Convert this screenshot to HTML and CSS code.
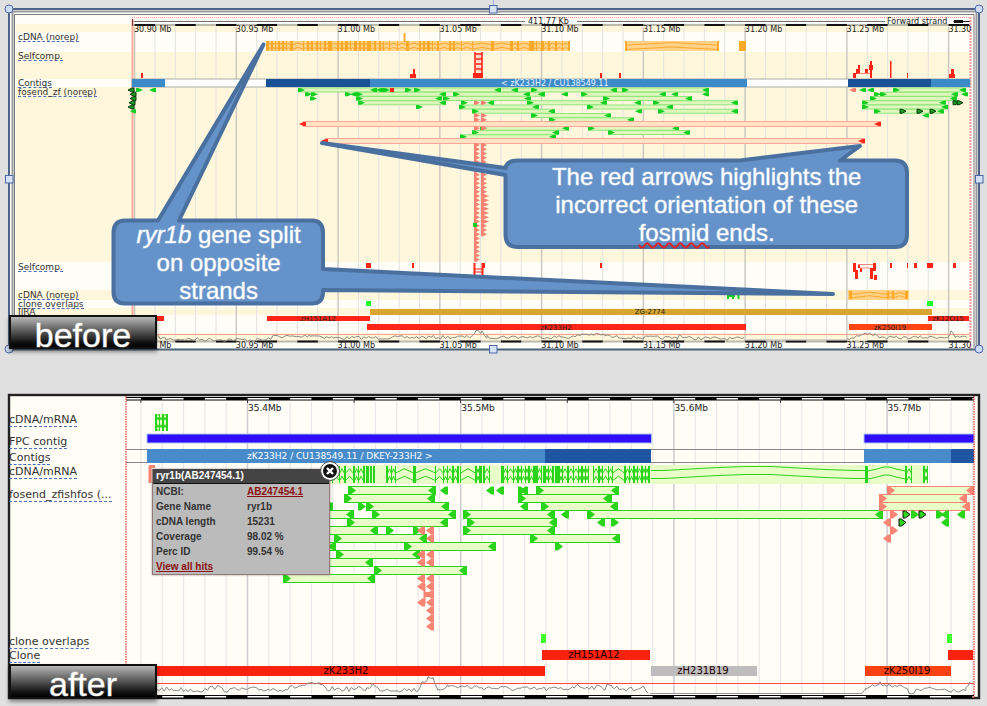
FILE: index.html
```
<!DOCTYPE html>
<html lang="en">
<head>
<meta charset="utf-8">
<title>ryr1b assembly: before and after</title>
<link rel="stylesheet" href="styles.css">
</head>
<body>
<main class="slide">
  <section class="stage stage-before" aria-label="before">
    <svg class="map" id="before" viewBox="0 0 987 385" role="img" aria-label="Region map before correction"></svg>
    <nav class="labels labels-before">
      <a href="#before">cDNA (norep)</a>
      <a href="#before">Selfcomp.</a>
      <a href="#before">Contigs</a>
      <a href="#before">fosend_zf (norep)</a>
      <a href="#before">Selfcomp.</a>
      <a href="#before">cDNA (norep)</a>
      <a href="#before">clone overlaps</a>
      <a href="#before">JIRA</a>
    </nav>
    <svg class="map callouts" id="callouts" viewBox="0 0 987 385" aria-hidden="true"></svg>
    <p class="callout callout-gene"><em>ryr1b</em> gene split<br>on opposite<br>strands</p>
    <p class="callout callout-arrows">The red arrows highlights the<br>incorrect orientation of these<br><span class="typo">fosmid</span> ends.</p>
    <h2 class="tag tag-before">before</h2>
  </section>
  <section class="stage stage-after" aria-label="after">
    <svg class="map" id="after" viewBox="0 385 987 321" role="img" aria-label="Region map after correction"></svg>
    <nav class="labels labels-after">
      <a href="#after">cDNA/mRNA</a>
      <a href="#after">FPC contig</a>
      <a href="#after">Contigs</a>
      <a href="#after">cDNA/mRNA</a>
      <a href="#after">fosend_zfishfos (...</a>
      <a href="#after">clone overlaps</a>
      <a href="#after">Clone</a>
    </nav>
    <aside class="popup">
      <h3>ryr1b(AB247454.1)</h3>
      <button class="close" type="button" aria-label="Close">
        <svg viewBox="0 0 20 20"><circle cx="10" cy="10" r="8" fill="#111" stroke="#fff" stroke-width="2"/><circle cx="10" cy="10" r="9.5" fill="none" stroke="#555"/><path d="M7 7l6 6M13 7l-6 6" stroke="#fff" stroke-width="2.4"/></svg>
      </button>
      <table>
        <tr><th scope="row">NCBI:</th><td><a href="#hit">AB247454.1</a></td></tr>
        <tr><th scope="row">Gene Name</th><td>ryr1b</td></tr>
        <tr><th scope="row">cDNA length</th><td>15231</td></tr>
        <tr><th scope="row">Coverage</th><td>98.02 %</td></tr>
        <tr><th scope="row">Perc ID</th><td>99.54 %</td></tr>
        <tr><td colspan="2"><a href="#hits">View all hits</a></td></tr>
      </table>
    </aside>
    <h2 class="tag tag-after">after</h2>
  </section>
</main>
<script src="map.js"></script>
</body>
</html>
```
FILE: styles.css
```
* { box-sizing: border-box; }
body { margin: 0; background: #e0e0e0; font-family: "Liberation Sans", Arial, sans-serif; }
.slide { display: flex; flex-direction: column; }
.stage { position: relative; display: grid; grid-template-columns: minmax(0, 1fr); }
.map { grid-area: 1 / 1; display: block; width: 100%; height: auto; }
.map text { font-family: "DejaVu Sans", sans-serif; }
.axis-before, .name-before { font-size: 8px; fill: #222; }
.name-before { font-size: 7px; }
.axis-after { font-size: 9px; fill: #222; }
.name-after { font-size: 10px; fill: #200; }
.on-blue { font-size: 8px; fill: #e8f4ff; }
.on-blue-after { font-size: 9px; fill: #fff; }
.mid { text-anchor: middle; }

/* Track names lie over the map; row shares follow the track heights. */
.labels { position: absolute; inset: 0 auto 0 0; display: grid; justify-items: start; font-family: "DejaVu Sans", sans-serif; }
.labels::before { content: ""; }
.labels a { color: #333; text-decoration: none; white-space: nowrap; align-self: start; border-bottom: 1px dashed #4a70b8; }
.labels-before { padding-left: 18px; font-size: 9px; line-height: 8px;
  grid-template-rows: minmax(0, 33fr) minmax(0, 19fr) minmax(0, 27fr) minmax(0, 9fr) minmax(0, 175fr) minmax(0, 28fr) minmax(0, 9fr) minmax(0, 8fr) minmax(0, 77fr); }
.labels-after { padding-left: 9px; font-size: 11px; line-height: 12px;
  grid-template-rows: minmax(0, 29fr) minmax(0, 22fr) minmax(0, 16fr) minmax(0, 14fr) minmax(0, 23fr) minmax(0, 147fr) minmax(0, 14fr) minmax(0, 56fr); }
.labels-before a:last-child { border-bottom: 0; }

.callouts { position: relative; pointer-events: none; }
.callout { position: absolute; margin: 0; color: #fff; font-size: 24px; line-height: 28px; text-align: center; white-space: nowrap; -webkit-text-stroke: 1px rgba(255, 255, 255, .4); }
.callout-gene { left: 11.4%; top: 221px; width: 21.5%; }
.callout-arrows { left: 51.2%; top: 163px; width: 40.8%; }
.typo { text-decoration: underline wavy #e02020 2px; text-underline-offset: 1px; text-decoration-skip-ink: none; }

.tag { position: absolute; left: 9px; width: 148px; height: 34px; margin: 0; border: 2px solid #111;
  background: linear-gradient(#b8b8b8, #666 40%, #111 85%, #000); color: #fff; font-size: 34px; font-weight: 400;
  line-height: 36px; text-align: center; box-shadow: 0 3px 4px rgba(0, 0, 0, .4); -webkit-text-stroke: 1px rgba(255, 255, 255, .4); }
.tag-before { top: 315px; }
.tag-after { top: 279px; height: 35px; }

.popup { position: absolute; left: 15.4%; top: 84px; width: 178px; border: 1px solid #967878; border-top: 0; background: #bbb;
  font-size: 10px; font-weight: 700; color: #333; box-shadow: 0 0 2px rgba(0, 0, 0, .4); }
.popup h3 { margin: 0; padding-left: 3px; background: #444; border-bottom: 1px solid #111; color: #fff; font-size: 10px; line-height: 14px; }
.popup table { width: 100%; border-collapse: collapse; table-layout: fixed; line-height: 15px; }
.popup th, .popup td { padding: 0 0 0 3px; text-align: left; }
.popup th { width: 91px; }
.popup a { color: #8c1010; }
.close { position: absolute; top: -8px; right: -11px; width: 20px; height: 20px; padding: 0; border: 0; background: none; }
.close svg { display: block; }
```
FILE: map.js
```
const NS = "http://www.w3.org/2000/svg";
let root;
function add(name, attrs, text) {
  const e = document.createElementNS(NS, name);
  for (const k in attrs) e.setAttribute(k, attrs[k]);
  if (text) e.textContent = text;
  root.appendChild(e);
  return e;
}
const rect = (x1, y1, x2, y2, fill, extra) => add("rect", Object.assign({ x: x1, y: y1, width: x2 - x1, height: y2 - y1, fill }, extra));
const path = (d, stroke, w, extra) => add("path", Object.assign({ d, stroke, "stroke-width": w || 1, fill: "none" }, extra));
const text = (x, y, cls, s) => add("text", { x, y, class: cls }, s);

// Seeded noise keeps the GC plots identical on every load.
let seed = 7;
const rnd = () => (seed = (seed * 16807) % 2147483647) / 2147483647;

// An end read: block with a point, dir 1 = right, -1 = left, x = left edge.
function arrow(x, y, dir, w, h, fill, stroke) {
  const m = w * 0.35, t = h / 2;
  const d = dir > 0
    ? `M${x} ${y - t}H${x + m}L${x + w} ${y}L${x + m} ${y + t}H${x}Z`
    : `M${x + w} ${y - t}H${x + w - m}L${x} ${y}L${x + w - m} ${y + t}H${x + w}Z`;
  add("path", { d, fill, stroke: stroke || "none", "stroke-width": 1 });
}
function pair(x1, x2, y, w, h, fill, line, body) {
  rect(x1, y - h / 2, x2, y + h / 2, body);
  path(`M${x1} ${y - h / 2}H${x2}M${x1} ${y + h / 2}H${x2}`, line);
  arrow(x1, y, 1, w, h, fill);
  arrow(x2 - w, y, -1, w, h, fill);
}
// Exons as [x, width] blocks joined by intron hats.
function exons(list, y1, y2, colour, depth) {
  const h = y2 - y1, rows = [y1 + h * 0.28, y1 + h * 0.72];
  let d = "";
  list.forEach(([x, w], i) => {
    rect(x, y1, x + w, y2, colour);
    const n = list[i + 1];
    if (!n) return;
    const a = x + w, m = (a + n[0]) / 2;
    if (n[0] - a < 2) return;
    rows.forEach(r => { d += `M${a} ${r + depth}L${m} ${r - depth}L${n[0]} ${r + depth}`; });
  });
  path(d, colour, 1);
}
function plot(points, amp, colour) {
  let d = "";
  for (let i = 0; i < points.length - 1; i++) {
    const [x1, y1] = points[i], [x2, y2] = points[i + 1];
    for (let x = x1; x < x2; x += 2.4) {
      const y = y1 + (y2 - y1) * (x - x1) / (x2 - x1) + (rnd() - 0.5) * amp;
      d += (d ? "L" : "M") + x.toFixed(1) + " " + y.toFixed(1);
    }
  }
  path(d, colour, 1);
}

/* ---------- before ---------- */
root = document.getElementById("before");
rect(8, 9, 980, 350, "#fffdf8");
[[24, 32], [52, 79], [87, 262], [290, 300], [308, 315], [333, 341]].forEach(([a, b]) => rect(16, a, 970, b, "#fff7dc"));
for (let k = 0; k <= 40; k++) {
  const x = 134.6 + 20.35 * k;
  path(`M${x} 27V341`, k % 5 ? "#e3e2e0" : "#c9c6c0", k % 5 ? 1 : 1.4);
}
path("M132 17.5H970", "#f99", 1, { "stroke-dasharray": "1 1" });
path("M132 21.5H525M577 21.5H885M953 21.5H970", "#777");
path("M954 21.5H963", "#111", 3);
path("M962 21.5H970", "#111", 1);
path("M132.5 19V349", "#ffab9c", 2);
path("M970.5 17V349", "#f99", 2, { "stroke-dasharray": "2 1" });
path("M132.5 19V26", "#833", 1);
text(528, 24, "axis-before", "411.77 Kb");
text(887, 24, "axis-before", "Forward strand");
[[24, 26], [340.5, 342.5]].forEach(([a, b]) => {
  rect(133, a, 970, b, "#bdbaab");
  for (let k = 0; k <= 40; k += 2) rect(134.6 + 20.35 * k, a, Math.min(969, 155 + 20.35 * k), b, "#111");
});
["30.90 Mb", "30.95 Mb", "31.00 Mb", "31.05 Mb", "31.10 Mb", "31.15 Mb", "31.20 Mb", "31.25 Mb", "31.30"].forEach((s, i) => {
  const x = 134 + 101.8 * i;
  text(x, 32, "axis-before", s);
  text(x, 348, "axis-before", s);
});

const O = "#ffa929", OL = "#ffd28a";
rect(266, 41, 570, 51, OL); rect(625, 41, 719, 51, OL); rect(739, 41, 746, 51, O);
exons([[266, 3], [271, 2], [275, 1], [278, 2], [282, 2], [286, 1], [290, 3], [303, 1], [307, 2], [311, 2], [316, 2], [320, 1], [324, 2], [328, 4], [337, 2], [341, 2], [345, 3], [350, 1], [354, 3], [359, 2], [363, 2], [367, 4], [374, 2], [379, 2], [383, 1], [389, 1], [397, 1], [406, 3], [419, 2], [423, 2], [427, 3], [432, 1], [437, 2], [449, 2], [453, 2], [461, 1], [472, 1], [491, 3], [510, 3], [517, 2], [529, 5], [536, 1], [541, 3], [548, 2], [555, 2], [562, 1], [568, 2]], 41, 51, O, 0.8);
exons([[625, 2], [717, 2]], 41, 51, O, 1.2);
path("M404.5 33V42", O, 2);
rect(848, 290, 909, 300, OL);
exons([[849, 3], [887, 2], [892, 2], [905, 3]], 291, 299, O, 1);

const R = "#ff2418";
[[141, 73, 143, 78], [410, 74, 416, 78], [413, 69, 415, 78], [473, 73, 483, 78], [600, 73, 602, 78], [619, 73, 621, 78],
 [853, 73, 856, 78], [856, 69, 858, 74], [858, 65, 860, 74], [865, 69, 868, 74], [869, 65, 873, 70], [870, 61, 872, 78], [890, 61, 891.5, 78], [907, 73, 908, 78], [949, 74, 955, 78], [951, 69, 954, 78],
 [366, 263, 371, 268], [412, 263, 414, 268], [482, 263, 485, 268], [600, 263, 602, 268], [853, 263, 856, 272], [855, 270, 858, 279], [858, 264, 860, 268], [860, 268, 862, 272], [870, 268, 873, 279], [873, 263, 876, 271], [874, 275, 877, 280], [890, 263, 892, 268], [907, 263, 908, 268], [914, 263, 917, 268], [927, 263, 933, 268], [953, 263, 956, 268]].forEach(r => rect(...r, R));
rect(475, 53, 482, 72, "#ffd9c9");
path("M475 52V76M482 52V74M475 54H482M476 59H482M476 64H482M476 69H482", R, 1.6);
path("M474.5 263V277M482.5 263V277", R, 2);
path("M475 269H482M475 272H482", R, 1);
path("M858 73.5H870M858 264.5H873M860 268H870", "#ff8878");

rect(132, 79, 970, 87, "#fff", { stroke: "#aaa" });
[[132, 165, "#3d8ac8"], [266, 370, "#1a5296"], [370, 747, "#3d8ac8"], [848, 931, "#1a5296"], [931, 970, "#3d8ac8"]].forEach(([a, b, c]) => rect(a, 79, b, 87, c));
text(501, 86, "on-blue", "< zK233H2 / CU138549.11");

const G = "#12cf22", GL = "#8fe77c", GB = "#dff7bd", P = "#fa8072";
const yb = r => 90 + 4.25 * r;
[[0, 298, 709], [1, 356, 446], [2, 356, 442], [2, 443, 531], [3, 358, 446], [3, 527, 607], [3, 653, 738], [4, 459, 539], [4, 587, 673], [5, 472, 555], [5, 658, 738], [6, 531, 611], [7, 549, 634],
 [9, 480, 569], [9, 588, 679], [10, 472, 559], [10, 608, 690], [11, 460, 556], [1, 453, 545], [1, 581, 666], [2, 603, 692],
 [0, 893, 966], [1, 880, 958], [2, 870, 957], [3, 862, 946], [4, 862, 948], [5, 874, 944]].forEach(([r, a, b]) => pair(a, b, yb(r), 7, 4, G, GL, GB));
[[0, 136, 1], [0, 149, -1], [0, 370, -1], [0, 376, -1], [0, 383, 1], [0, 405, 1], [0, 414, 1], [0, 494, -1], [0, 511, -1], [0, 531, 1], [0, 610, -1], [0, 622, 1],
 [1, 305, 1], [1, 311, 1], [1, 345, 1], [1, 350, -1], [1, 523, -1], [1, 538, -1], [1, 561, -1], [1, 671, -1], [1, 702, -1], [2, 310, 1], [3, 461, 1], [3, 487, -1], [3, 634, -1], [4, 416, 1], [5, 635, -1],
 [0, 859, -1], [0, 867, -1], [1, 874, 1], [1, 961, -1], [2, 950, -1], [6, 922, -1]].forEach(([r, x, d]) => arrow(x, yb(r), d, 7, 4, G));
[[0, 128, -1], [1, 130, -1], [2, 130, -1], [3, 129, -1], [4, 128, -1], [3, 953, 1], [3, 957, 1], [5, 900, 1], [5, 917, 1], [5, 930, 1]].forEach(([r, x, d]) => arrow(x, yb(r), d, 6, 4, "#169a20", "#103a10"));
arrow(130, yb(5), -1, 6, 4, G);
rect(390, 88, 394, 92, R);
arrow(849, yb(0), -1, 7, 4, P);
[[299, 881, 124], [321, 865, 141]].forEach(([a, b, y]) => {
  rect(a + 4, y - 2.5, b, y + 2.5, "#ffe3c5");
  path(`M${a + 4} ${y - 2.5}H${b}M${a + 4} ${y + 2.5}H${b}`, "#ffa597");
  arrow(a, y, -1, 7, 4, R);
  arrow(b - 7, y, -1, 7, 4, R);
});
[3, 6, 7, 9].forEach(r => { arrow(474, yb(r), 1, 6, 4, P); arrow(481, yb(r), 1, 6, 4, P); });
for (let y = 145; y < 262; y += 4.25) {
  arrow(474, y, 1, 6, 4, P);
  if (y < 236) arrow(481, y, 1, y > 192 && y < 222 ? 8 : 6, 4, P);
}
path("M475 143V261M482.5 143V234", P, 2);
rect(473, 223, 477, 227, G);

rect(366, 301, 371, 306, "#1cff28"); rect(927, 301, 933, 306, "#1cff28");
path("M728 295V299M733 295V299M738.5 295V299M727 296H735", G, 2);
rect(370, 309, 932, 315, "#d8a530");
rect(132, 316, 164, 321, R); rect(267, 316, 370, 321, R); rect(928, 316, 969, 321, R);
rect(367, 324, 746, 330, R); rect(849, 324, 932, 330, "#ff4516");
text(650, 314, "name-before mid", "ZG-2774");
text(318, 321, "name-before mid", "zH151A12");
text(948, 321, "name-before mid", "zK12O15");
text(556, 330, "name-before mid", "zK233H2");
text(890, 330, "name-before mid", "zK250I19");
path("M132 334.5H970", "#ffa090");
plot([[158, 337], [166, 339], [266, 340], [275, 336], [300, 337], [310, 335], [335, 338], [470, 337], [476, 332], [482, 332], [487, 337], [575, 337], [582, 334], [605, 335], [612, 337], [677, 338], [680, 334], [684, 338], [745, 339]], 3.5, "#8a8a80");
plot([[745, 340], [847, 340]], 0, "#aaa");
plot([[847, 339], [865, 334], [875, 334], [882, 338], [948, 337], [951, 332], [955, 337], [969, 337]], 3, "#8a8a80");

// Selection frame with its handles.
path("M9 9V349M979 9V349M9 9H979", "#4d638a", 2);
path("M9 349.5H979", "#4d6378", 2);
path("M12.5 11V348M11 11.5H977M976.5 11V348", "#999", 2);
path("M14.5 14.5H974V348M14.5 14.5V348", "#777", 1);
path("M493.5 0V6", "#9db1e2");
[[9, 9], [979, 9], [9, 349], [979, 349]].forEach(([cx, cy]) => add("circle", { cx, cy, r: 4, fill: "#cfdcf5", stroke: "#4d68a8" }));
[[493, 9], [493, 349], [9, 179], [979, 179]].forEach(([x, y]) => rect(x - 3.5, y - 3.5, x + 4, y + 4, "#d5e1f5", { stroke: "#4d68a8" }));

/* ---------- callouts ---------- */
root = document.getElementById("callouts");
const bubble = { fill: "#6592c8", "stroke-linejoin": "round" };
path("M125 220.500H158L263.500 44.500L179 220.500H312Q323 220.500 323 233V269L833 294L323 290V292Q323 303.500 312 303.500H125Q113.500 303.500 113.500 292V233Q113.500 220.500 125 220.500Z", "#4a709f", 4, bubble);
path("M518 160.500H740L860 146L840 160.500H895Q907 160.500 907 173V235Q907 247 895 247H518Q505.500 247 505.500 235V175L322 143L505.500 168Q507 160.500 518 160.500Z", "#4a709f", 4, bubble);

/* ---------- after ---------- */
root = document.getElementById("after");
rect(9, 395, 979, 698, "#fffdf6", { stroke: "#222", "stroke-width": 2.4 });
for (let k = -5; k <= 34; k++) {
  const x = 247.5 + 21.32 * k;
  if (x < 973) path(`M${x} 402V694`, k % 10 ? "#e8e8e8" : "#cdcdd0", k % 10 ? 1.2 : 1.5);
}
[[397, 400], [695, 698]].forEach(([a, b]) => {
  rect(126, a, 974, b, "#fff");
  path(`M126 ${a + .5}H974M126 ${b - .0}H974`, "#000");
  for (let k = -5; k <= 34; k += 2) {
    const x = 247.5 + 21.32 * k;
    rect(x, a, Math.min(974, x + 21.32), b, "#000");
  }
});
for (let k = -5; k <= 30; k += 5) path(`M${247.5 + 21.32 * k} 400V403`, "#333");
["35.4Mb", "35.5Mb", "35.6Mb", "35.7Mb"].forEach((s, i) => text(248 + 213.2 * i, 411, "axis-after", s));

const H = "#2bd41c", B = "#e8fdc8", S = "#f88474";
rect(155, 414, 168, 431, B);
exons([[155, 2], [159, 1], [162, 2], [166, 2]], 414, 431, H, 1.5);
path("M155 415H159M155 430H159M162 415H168", H);
rect(147, 434, 651.500, 443, "#2e0ef8", { stroke: "#a9c4f4" });
rect(864, 434, 974, 443, "#2e0ef8", { stroke: "#a9c4f4" });
path("M126 449.500H974M126 462.500H974", "#888");
[[147, 545, "#478bcb"], [545, 651, "#20559f"], [864, 951, "#478bcb"], [951, 974, "#20559f"]].forEach(([a, b, c]) => rect(a, 449, b, 463, c));
text(247, 459, "on-blue-after", "zK233H2 / CU138549.11 / DKEY-233H2 >");
rect(330, 465, 928, 484, B);
exons([[332, 1], [339, 1], [344, 2], [353, 2], [358, 1], [363, 2], [366, 3], [370, 2], [373, 2]], 466, 483, H, 2);
exons([[386, 2], [391, 1], [395, 1], [413, 3], [435, 1], [443, 1], [447, 1], [452, 2], [457, 2], [460, 1], [475, 2], [479, 3], [483, 2], [489, 1]], 466, 483, H, 2);
exons([[501, 3], [507, 1], [513, 1], [517, 2], [521, 1], [525, 1], [528, 2], [533, 4]], 466, 483, H, 2);
exons([[537, 1], [541, 1], [543, 3], [548, 1], [552, 2], [555, 5], [562, 1], [567, 2], [573, 1], [578, 1], [581, 2], [585, 1], [588, 1]], 466, 483, H, 2);
exons([[593, 1], [598, 2], [602, 1], [608, 1], [612, 1], [624, 2], [629, 1], [633, 2], [637, 1], [641, 2], [645, 1], [648, 2]], 466, 483, H, 2);
path("M651 470.500H664L691 469L718 467.500L745 466.500H771L798 468L825 469.500L853 470.500H865M651 478.500H664L691 477L718 475.500L745 474.500H771L798 476L825 477.500L853 478.500H865", H);
rect(865, 466, 868, 483, H);
path("M868 471L877 469L884 467H889L896 469L905 471M868 479L877 477L884 475H889L896 477L905 479", H);
exons([[905, 2], [911, 1]], 466, 483, H, 2);
exons([[923, 2], [927, 1]], 466, 483, H, 2);
path("M150 466V483M149 466.500H155", S, 3);

const ya = r => 490.5 + 8 * r;
[[0, 348, 436], [0, 536, 619], [1, 344, 435], [1, 518, 611], [2, 366, 449], [2, 541, 618], [3, 290, 354], [3, 372, 456], [3, 463, 555], [3, 587, 883],
 [4, 347, 448], [4, 467, 557], [5, 290, 378], [5, 463, 555], [6, 334, 427], [6, 530, 620], [7, 290, 336], [7, 404, 496], [8, 336, 420], [9, 290, 373], [10, 374, 467], [11, 283, 375]].forEach(([r, a, b]) => pair(a, b, ya(r), 8, 8, H, H, B));
[[0, 887, 974], [1, 879, 967], [2, 879, 970]].forEach(([r, a, b]) => pair(a, b, ya(r), 8, 8, S, S, B));
[[0, 440, -1], [0, 486, -1], [0, 496, -1], [0, 518, 1], [0, 520, -1], [1, 604, -1], [2, 325, -1], [2, 358, 1], [2, 520, -1], [3, 561, -1], [4, 597, -1], [4, 611, 1], [5, 386, 1], [5, 413, 1], [7, 555, 1],
 [3, 911, 1], [3, 936, 1], [3, 941, -1], [3, 957, -1], [4, 941, -1]].forEach(([r, x, d]) => arrow(x, ya(r), d, 8, 8, H));
[[3, 890, 1], [4, 883, -1], [5, 890, 1], [6, 883, -1]].forEach(([r, x, d]) => arrow(x, ya(r), d, 8, 8, S));
[[3, 903, 1], [3, 919, 1], [4, 899, 1]].forEach(([r, x, d]) => arrow(x, ya(r), d, 7, 7, H, "#111"));
[5, 8, 9, 11, 12, 14].forEach(r => arrow(417, ya(r), -1, 8, 8, S));
[5, 6, 8, 9, 11, 12, 13, 14, 15, 16, 17].forEach(r => arrow(426, ya(r), -1, 8, 8, S));
path("M424.500 584V604", S, 2);
rect(424, 592, 430, 597, S);

rect(541, 634, 546, 643, "#40ff2a"); rect(947, 634, 952, 643, "#40ff2a");
const red = "#f8220f";
rect(542, 650, 650, 660, red); rect(948, 650, 973, 660, red);
rect(132, 666, 545, 676, red); rect(651, 666, 757, 676, "#bdbdbd"); rect(865, 666, 951, 676, "#f94212");
text(594, 658, "name-after mid", "zH151A12");
text(346, 674, "name-after mid", "zK233H2");
text(703, 674, "name-after mid", "zH231B19");
text(907, 674, "name-after mid", "zK250I19");
path("M126 683.500H974", "#f44");
plot([[157, 689], [205, 690], [215, 687], [225, 690], [285, 689], [300, 686], [320, 684], [325, 689], [367, 689], [372, 684], [378, 689], [418, 690], [422, 682], [428, 679], [433, 680], [438, 689], [448, 686], [520, 689], [565, 689], [575, 686], [605, 688], [607, 683], [612, 687], [635, 690], [641, 687], [650, 692]], 5, "#888");
path("M650 693.500H862L866 688", "#999");
plot([[865, 688], [880, 684], [890, 684], [905, 688], [909, 693], [925, 689], [966, 690], [970, 684], [972, 676]], 5, "#888");
path("M126 396V694M974 396V698", "#e33", 1.2, { "stroke-dasharray": "1.5 1" });
```
